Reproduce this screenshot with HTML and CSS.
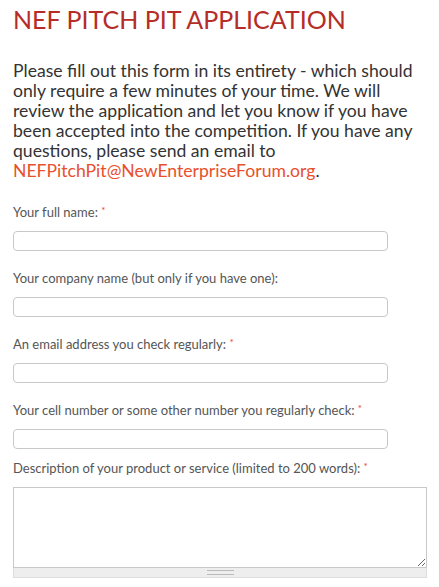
FILE: index.html
```html
<!DOCTYPE html>
<html lang="en">
<head>
<meta charset="utf-8">
<title>NEF Pitch Pit Application</title>
<link rel="stylesheet" href="styles.css">
</head>
<body>
<div class="page">
  <h1 class="title">NEF PITCH PIT APPLICATION</h1>
  <p class="intro">Please fill out this form in its entirety - which should only require a few minutes of your time. We will review the application and let you know if you have been accepted into the competition. If you have any questions, please send an email to <a class="mail" href="#">NEFPitchPit@NewEnterpriseForum.org</a>.</p>
  <form class="form">
    <div class="field">
      <label class="label">Your full name: <span class="req">*</span></label>
      <input class="text" type="text">
    </div>
    <div class="field">
      <label class="label">Your company name (but only if you have one):</label>
      <input class="text" type="text">
    </div>
    <div class="field">
      <label class="label">An email address you check regularly: <span class="req">*</span></label>
      <input class="text" type="text">
    </div>
    <div class="field">
      <label class="label">Your cell number or some other number you regularly check: <span class="req">*</span></label>
      <input class="text" type="text">
    </div>
    <div class="field field-desc">
      <label class="label">Description of your product or service (limited to 200 words): <span class="req">*</span></label>
      <div class="ta-wrap">
        <textarea class="area"></textarea>
        <div class="grip"><span class="grip-lines"></span></div>
      </div>
    </div>
  </form>
</div>
</body>
</html>
```
FILE: styles.css
```css
html, body {
  margin: 0;
  padding: 0;
  background: #fff;
}
.page {
  padding: 0 12px 0 13px;
  font-family: Lato, "Open Sans", sans-serif;
}
.title {
  margin: 0;
  padding-top: 5px;
  font-size: 25px;
  font-weight: 400;
  line-height: 28px;
  color: #b62c27;
}
.intro {
  margin: 28px 0 0 0;
  font-size: 17.6px;
  line-height: 20px;
  color: #333;
}
.mail {
  color: #e8502c;
  text-decoration: none;
}
.form {
  margin-top: 23px;
  display: flex;
  flex-direction: column;
}
.field {
  display: flex;
  flex-direction: column;
  margin-bottom: 19px;
}
.label {
  font-size: 13px;
  line-height: 16px;
  color: #555;
  margin-bottom: 11px;
}
.req {
  color: #e8432a;
  font-size: 10px;
  vertical-align: top;
  line-height: 12px;
}
.text {
  box-sizing: border-box;
  width: 375px;
  height: 20px;
  margin: 0;
  border: 1px solid #c8c8c8;
  border-radius: 4px;
  background: #fff;
  padding: 0 6px;
}
.field-desc {
  margin-top: -8px;
}
.ta-wrap {
  width: 414px;
  display: flex;
  flex-direction: column;
}
.area {
  box-sizing: border-box;
  width: 414px;
  height: 81px;
  margin: 0;
  border: 1px solid #c8c8c8;
  border-radius: 0;
  resize: vertical;
  display: block;
}
.grip {
  box-sizing: border-box;
  height: 10px;
  background: #eee;
  border: 1px solid #ddd;
  border-top: none;
  display: flex;
  justify-content: center;
  align-items: center;
}
.grip-lines {
  width: 27px;
  height: 3px;
  border-top: 1px solid #bbb;
  border-bottom: 1px solid #bbb;
}
```
